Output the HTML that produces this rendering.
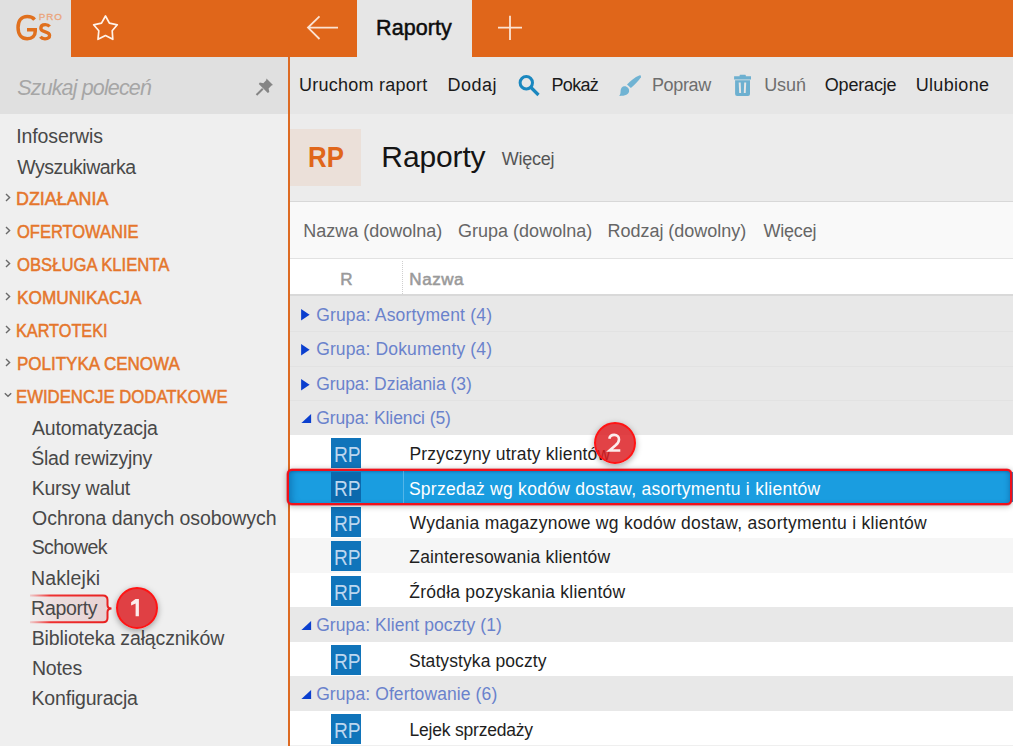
<!DOCTYPE html>
<html><head><meta charset="utf-8"><style>
html,body{margin:0;padding:0;width:1013px;height:746px;overflow:hidden;background:#efefef}
body{position:relative;font-family:"Liberation Sans",sans-serif}
body>div,body>svg{position:absolute}
.t{line-height:1;white-space:nowrap}
</style></head><body>
<div style="left:0px;top:0px;width:1013px;height:746px;background:#efefef;"></div>
<div style="left:0px;top:0px;width:71px;height:57px;background:#e0e0e0;"></div>
<div style="left:71px;top:0px;width:286px;height:57px;background:#e0661a;"></div>
<div style="left:357px;top:0px;width:115px;height:57px;background:#e6e6e6;"></div>
<div style="left:472px;top:0px;width:541px;height:57px;background:#e0661a;"></div>
<div style="left:0px;top:57px;width:288px;height:57px;background:#e0e0e0;"></div>
<div style="left:290px;top:57px;width:723px;height:57px;background:#e6e6e6;"></div>
<div style="left:290px;top:114px;width:723px;height:87px;background:#ececec;"></div>
<div style="left:290px;top:201px;width:723px;height:1px;background:#d8d8d8;"></div>
<div style="left:290px;top:202px;width:723px;height:56px;background:#f9f9f9;"></div>
<div style="left:290px;top:258px;width:723px;height:1px;background:#e2e2e2;"></div>
<div style="left:290px;top:259px;width:723px;height:35px;background:#ffffff;"></div>
<div style="left:290px;top:294px;width:723px;height:2px;background:#d9d9d9;"></div>
<div style="left:288px;top:57px;width:2px;height:689px;background:#dd6a22;"></div>
<svg style="left:10px;top:8px" width="60" height="40" viewBox="10 8 60 40"><path d="M34.6,19.6 C33,17.5 30.4,16.55 27.2,16.55 C21.6,16.55 18.05,20.6 18.05,27.6 C18.05,34.7 21.6,38.75 27.2,38.75 C32.2,38.75 35.25,35.9 35.25,31.2 V29.85 H27" fill="none" stroke="#e0701e" stroke-width="3.5"/><path d="M49.6,26.6 C48.6,25.3 47,24.7 45.2,24.7 C42.4,24.7 40.8,26.2 40.8,28.2 C40.8,33 49.6,30.8 49.6,35.3 C49.6,37.5 47.8,38.8 45,38.8 C42.9,38.8 41.3,38 40.4,36.8" fill="none" stroke="#e0701e" stroke-width="3.3"/></svg>
<div class="t" style="left:38.8px;top:12px;font-size:9.8px;color:#eba47a;letter-spacing:0.9px;-webkit-text-stroke:0.3px #eba47a">PRO</div>
<svg style="left:90px;top:12px" width="32" height="32" viewBox="90 12 32 32"><path d="M105.5,16 L109.4,23.2 L117.3,24.8 L112.2,30.8 L112.8,39.3 L105.5,35.6 L98,39.3 L98.8,30.8 L93.6,24.8 L101.5,23.2 Z" fill="none" stroke="#fff3ea" stroke-width="1.7" stroke-linejoin="round"/></svg>
<svg style="left:300px;top:10px" width="45" height="36" viewBox="300 10 45 36"><path d="M308,27.6 H338 M319.5,16.3 L308,27.6 L319.5,39" fill="none" stroke="#fbe3d3" stroke-width="1.8"/></svg>
<svg style="left:495px;top:12px" width="30" height="32" viewBox="495 12 30 32"><path d="M498,27.6 H522 M510,15.8 V40" fill="none" stroke="#fbe3d3" stroke-width="1.8"/></svg>
<div class="t" id="tab" style="left:376.11px;top:18px;font-size:21.5px;color:#0d0d0d;-webkit-text-stroke:0.5px #0d0d0d;letter-spacing:0.043px;">Raporty</div>
<div class="t" id="tb1" style="left:298.97px;top:76px;font-size:18px;color:#1a1a1a;letter-spacing:0.257px;">Uruchom raport</div>
<div class="t" id="tb2" style="left:447.54px;top:76px;font-size:18px;color:#1a1a1a;letter-spacing:0.511px;">Dodaj</div>
<div class="t" id="tb3" style="left:551.55px;top:76px;font-size:18px;color:#1a1a1a;letter-spacing:-0.690px;">Pokaż</div>
<div class="t" id="tb4" style="left:651.95px;top:76px;font-size:18px;color:#6e6e6e;letter-spacing:-0.344px;">Popraw</div>
<div class="t" id="tb5" style="left:764.15px;top:76px;font-size:18px;color:#6e6e6e;letter-spacing:-0.043px;">Usuń</div>
<div class="t" id="tb6" style="left:824.79px;top:76px;font-size:18px;color:#1a1a1a;letter-spacing:-0.174px;">Operacje</div>
<div class="t" id="tb7" style="left:915.65px;top:76px;font-size:18px;color:#1a1a1a;letter-spacing:0.327px;">Ulubione</div>
<svg style="left:515px;top:72px" width="28" height="28" viewBox="515 72 28 28"><circle cx="526.3" cy="82.8" r="6.2" fill="none" stroke="#1a87bf" stroke-width="3"/><path d="M531,87.5 L538.5,95" stroke="#1a87bf" stroke-width="3.2"/></svg>
<svg style="left:615px;top:72px" width="30" height="28" viewBox="615 72 30 28"><path d="M627,84.6 C630.6,80.8 635,77.2 639.2,75.5 Q641.5,74.8 640.9,77.3 C638.6,81 634.6,85 630.9,88 Z" fill="#70b3d3"/><path d="M623.9,86.3 C626.9,85.8 629.4,88.3 629.1,91.3 C628.8,94.3 625.5,96 619.2,96 C620.5,94.6 620.5,92.8 620.6,90.8 C620.7,88.6 622,86.7 623.9,86.3 Z" fill="#70b3d3"/></svg>
<svg style="left:730px;top:72px" width="26" height="28" viewBox="730 72 26 28"><path d="M739.6,76.3 V75.2 Q739.6,74.8 740,74.8 H745.4 Q745.8,74.8 745.8,75.2 V76.3 H751 V79.6 H734.1 V76.3 Z" fill="#6db0d0"/><path d="M735.1,80.2 H750 V94 Q750,96 748,96 H737.1 Q735.1,96 735.1,94 Z M738.7,82.4 L739.2,92.9 H741.1 L740.7,82.4 Z M744.2,82.4 L743.8,92.9 H745.7 L746.2,82.4 Z" fill="#6db0d0" fill-rule="evenodd"/></svg>
<div class="t" id="search" style="left:17.29px;top:78px;font-size:21.5px;color:#a6a6a6;letter-spacing:-0.866px;font-style:italic;">Szukaj poleceń</div>
<svg style="left:252px;top:74px" width="26" height="26" viewBox="252 74 26 26"><path d="M266.5,78.5 L273,85 L271.5,85.6 L268.6,88.5 L269.3,92 L267.8,93 L258.8,84 L259.8,82.5 L263.3,83.2 L266.2,80.3 Z" fill="#858585"/><path d="M262.8,88.7 L256.5,95" stroke="#858585" stroke-width="2"/></svg>
<div class="t" id="sb1" style="left:16.16px;top:127px;font-size:19.5px;color:#484848;letter-spacing:-0.097px;">Infoserwis</div>
<div class="t" id="sb2" style="left:17.30px;top:158px;font-size:19.5px;color:#484848;letter-spacing:-0.502px;">Wyszukiwarka</div>
<div class="t" id="cat0" style="left:16.09px;top:191px;font-size:17.5px;color:#e5762b;-webkit-text-stroke:0.5px #e5762b;transform:scaleX(1.0213);transform-origin:0 0;">DZIAŁANIA</div>
<svg style="left:3px;top:191px" width="12" height="12" viewBox="3 191 12 12"><path d="M6,194.1 L9.6,197.5 L6,200.9" fill="none" stroke="#6a6a6a" stroke-width="1.4"/></svg>
<div class="t" id="cat1" style="left:17.31px;top:224px;font-size:17.5px;color:#e5762b;-webkit-text-stroke:0.5px #e5762b;transform:scaleX(0.9423);transform-origin:0 0;">OFERTOWANIE</div>
<svg style="left:3px;top:224px" width="12" height="12" viewBox="3 224 12 12"><path d="M6,227.1 L9.6,230.5 L6,233.9" fill="none" stroke="#6a6a6a" stroke-width="1.4"/></svg>
<div class="t" id="cat2" style="left:17.24px;top:257px;font-size:17.5px;color:#e5762b;-webkit-text-stroke:0.5px #e5762b;transform:scaleX(0.9517);transform-origin:0 0;">OBSŁUGA KLIENTA</div>
<svg style="left:3px;top:257px" width="12" height="12" viewBox="3 257 12 12"><path d="M6,260.1 L9.6,263.5 L6,266.9" fill="none" stroke="#6a6a6a" stroke-width="1.4"/></svg>
<div class="t" id="cat3" style="left:16.58px;top:290px;font-size:17.5px;color:#e5762b;-webkit-text-stroke:0.5px #e5762b;transform:scaleX(0.9844);transform-origin:0 0;">KOMUNIKACJA</div>
<svg style="left:3px;top:290px" width="12" height="12" viewBox="3 290 12 12"><path d="M6,293.1 L9.6,296.5 L6,299.9" fill="none" stroke="#6a6a6a" stroke-width="1.4"/></svg>
<div class="t" id="cat4" style="left:16.38px;top:323px;font-size:17.5px;color:#e5762b;-webkit-text-stroke:0.5px #e5762b;transform:scaleX(0.9283);transform-origin:0 0;">KARTOTEKI</div>
<svg style="left:3px;top:323px" width="12" height="12" viewBox="3 323 12 12"><path d="M6,326.1 L9.6,329.5 L6,332.9" fill="none" stroke="#6a6a6a" stroke-width="1.4"/></svg>
<div class="t" id="cat5" style="left:16.62px;top:356px;font-size:17.5px;color:#e5762b;-webkit-text-stroke:0.5px #e5762b;transform:scaleX(0.9713);transform-origin:0 0;">POLITYKA CENOWA</div>
<svg style="left:3px;top:356px" width="12" height="12" viewBox="3 356 12 12"><path d="M6,359.1 L9.6,362.5 L6,365.9" fill="none" stroke="#6a6a6a" stroke-width="1.4"/></svg>
<div class="t" id="cat6" style="left:16.01px;top:389px;font-size:17.5px;color:#e5762b;-webkit-text-stroke:0.5px #e5762b;transform:scaleX(0.9562);transform-origin:0 0;">EWIDENCJE DODATKOWE</div>
<svg style="left:3px;top:388px" width="12" height="12" viewBox="3 388 12 12"><path d="M4.8,393.3 L8,396.3 L11.2,393.3" fill="none" stroke="#6a6a6a" stroke-width="1.4"/></svg>
<div class="t" id="sub0" style="left:31.92px;top:419px;font-size:19.5px;color:#484848;letter-spacing:-0.153px;">Automatyzacja</div>
<div class="t" id="sub1" style="left:31.30px;top:449px;font-size:19.5px;color:#484848;letter-spacing:-0.275px;">Ślad rewizyjny</div>
<div class="t" id="sub2" style="left:31.64px;top:479px;font-size:19.5px;color:#484848;letter-spacing:-0.219px;">Kursy walut</div>
<div class="t" id="sub3" style="left:32.12px;top:509px;font-size:19.5px;color:#484848;letter-spacing:-0.072px;">Ochrona danych osobowych</div>
<div class="t" id="sub4" style="left:31.64px;top:538px;font-size:19.5px;color:#484848;letter-spacing:-0.541px;">Schowek</div>
<div class="t" id="sub5" style="left:31.12px;top:569px;font-size:19.5px;color:#484848;letter-spacing:0.107px;">Naklejki</div>
<svg style="left:28px;top:592px" width="90" height="34" viewBox="28 592 90 34"><defs><linearGradient id="hg" x1="0" x2="1"><stop offset="0" stop-color="#efe3e3" stop-opacity="0.2"/><stop offset="0.3" stop-color="#eddede"/><stop offset="1" stop-color="#e6d0d2"/></linearGradient><linearGradient id="hb" x1="0" x2="1"><stop offset="0" stop-color="#f04040" stop-opacity="0.2"/><stop offset="0.25" stop-color="#ee3030"/><stop offset="1" stop-color="#e82020"/></linearGradient></defs><path d="M30,595.5 H103 Q107.5,595.5 107.5,600 V605 Q107.5,608.5 111.5,608.5 Q107.5,608.5 107.5,612 V618 Q107.5,622.3 103,622.3 H30" fill="url(#hg)" stroke="url(#hb)" stroke-width="2"/></svg>
<div class="t" id="sub6" style="left:31.12px;top:599px;font-size:19.5px;color:#484848;letter-spacing:-0.307px;">Raporty</div>
<div class="t" id="sub7" style="left:31.64px;top:629px;font-size:19.5px;color:#484848;letter-spacing:-0.119px;">Biblioteka załączników</div>
<div class="t" id="sub8" style="left:31.96px;top:659px;font-size:19.5px;color:#484848;letter-spacing:-0.167px;">Notes</div>
<div class="t" id="sub9" style="left:31.54px;top:689px;font-size:19.5px;color:#484848;letter-spacing:-0.185px;">Konfiguracja</div>
<div style="left:290px;top:129px;width:71px;height:57px;background:#ebe0d9;"></div>
<div class="t" id="rpbig" style="left:307.94px;top:142px;font-size:30px;color:#e0661a;font-weight:700;transform:scaleX(0.8604);transform-origin:0 0;">RP</div>
<div class="t" id="title" style="left:381.37px;top:142px;font-size:30px;color:#141414;letter-spacing:-0.135px;">Raporty</div>
<div class="t" id="more" style="left:501.71px;top:150px;font-size:18px;color:#555555;letter-spacing:-0.231px;">Więcej</div>
<div class="t" id="flt0" style="left:303.22px;top:222px;font-size:18px;color:#666666;letter-spacing:-0.010px;">Nazwa (dowolna)</div>
<div class="t" id="flt1" style="left:458.04px;top:222px;font-size:18px;color:#666666;letter-spacing:0.007px;">Grupa (dowolna)</div>
<div class="t" id="flt2" style="left:607.55px;top:222px;font-size:18px;color:#666666;letter-spacing:-0.032px;">Rodzaj (dowolny)</div>
<div class="t" id="flt3" style="left:763.39px;top:222px;font-size:18px;color:#666666;letter-spacing:-0.187px;">Więcej</div>
<div class="t" id="colR" style="left:340.35px;top:271px;font-size:17px;color:#9a9a9a;-webkit-text-stroke:0.55px #9a9a9a;letter-spacing:-2.096px;">R</div>
<div class="t" id="colN" style="left:409.37px;top:271px;font-size:17px;color:#9a9a9a;-webkit-text-stroke:0.55px #9a9a9a;letter-spacing:0.520px;">Nazwa</div>
<div style="left:402px;top:261px;width:0;height:33px;border-left:1px dotted #cfcfcf"></div>
<div style="left:290px;top:296px;width:723px;height:35px;background:#e8e8e8;"></div>
<svg style="left:300px;top:306px" width="14" height="16" viewBox="300 306 14 16"><path d="M301.1,309.1 L309.6,314.8 L301.1,320.5 Z" fill="#0b3fcf"/></svg>
<div class="t" id="row0" style="left:316.13px;top:307px;font-size:17.5px;color:#6a82cc;letter-spacing:0.185px;">Grupa: Asortyment (4)</div>
<div style="left:290px;top:331px;width:723px;height:35px;background:#e8e8e8;"></div>
<div style="left:290px;top:331px;width:723px;height:1px;background:#e2e2e2;"></div>
<svg style="left:300px;top:341px" width="14" height="16" viewBox="300 341 14 16"><path d="M301.1,344.1 L309.6,349.8 L301.1,355.5 Z" fill="#0b3fcf"/></svg>
<div class="t" id="row1" style="left:316.13px;top:341px;font-size:17.5px;color:#6a82cc;letter-spacing:0.147px;">Grupa: Dokumenty (4)</div>
<div style="left:290px;top:366px;width:723px;height:34px;background:#e8e8e8;"></div>
<div style="left:290px;top:366px;width:723px;height:1px;background:#e2e2e2;"></div>
<svg style="left:300px;top:376px" width="14" height="16" viewBox="300 376 14 16"><path d="M301.1,379.1 L309.6,384.8 L301.1,390.5 Z" fill="#0b3fcf"/></svg>
<div class="t" id="row2" style="left:316.13px;top:376px;font-size:17.5px;color:#6a82cc;letter-spacing:-0.052px;">Grupa: Działania (3)</div>
<div style="left:290px;top:400px;width:723px;height:35px;background:#e8e8e8;"></div>
<div style="left:290px;top:400px;width:723px;height:1px;background:#e2e2e2;"></div>
<svg style="left:300px;top:410px" width="14" height="16" viewBox="300 410 14 16"><path d="M301.4,423 H311.1 V414 Z" fill="#0b3fcf"/></svg>
<div class="t" id="row3" style="left:316.13px;top:410px;font-size:17.5px;color:#6a82cc;letter-spacing:-0.079px;">Grupa: Klienci (5)</div>
<div style="left:290px;top:435px;width:723px;height:34px;background:#ffffff;"></div>
<div style="left:331px;top:438px;width:30px;height:30px;background:#1074ba;"></div>
<div class="t" id="rp4" style="left:333.94px;top:445px;font-size:21.5px;color:#bcd7ef;transform:scaleX(0.8916);transform-origin:0 0;">RP</div>
<div class="t" id="row4" style="left:409.43px;top:446px;font-size:17.5px;color:#1e1e1e;letter-spacing:0.178px;">Przyczyny utraty klientów</div>
<div style="left:290px;top:469px;width:723px;height:35px;background:#ffffff;"></div>
<div style="left:290px;top:504px;width:723px;height:34px;background:#ffffff;"></div>
<div style="left:331px;top:507px;width:30px;height:30px;background:#1074ba;"></div>
<div class="t" id="rp6" style="left:333.94px;top:514px;font-size:21.5px;color:#bcd7ef;transform:scaleX(0.8916);transform-origin:0 0;">RP</div>
<div class="t" id="row6" style="left:409.62px;top:515px;font-size:17.5px;color:#1e1e1e;letter-spacing:0.286px;">Wydania magazynowe wg kodów dostaw, asortymentu i klientów</div>
<div style="left:290px;top:538px;width:723px;height:35px;background:#f6f6f6;"></div>
<div style="left:331px;top:541px;width:30px;height:30px;background:#1074ba;"></div>
<div class="t" id="rp7" style="left:333.94px;top:548px;font-size:21.5px;color:#bcd7ef;transform:scaleX(0.8916);transform-origin:0 0;">RP</div>
<div class="t" id="row7" style="left:409.26px;top:549px;font-size:17.5px;color:#1e1e1e;letter-spacing:0.188px;">Zainteresowania klientów</div>
<div style="left:290px;top:573px;width:723px;height:34px;background:#ffffff;"></div>
<div style="left:331px;top:576px;width:30px;height:30px;background:#1074ba;"></div>
<div class="t" id="rp8" style="left:333.94px;top:583px;font-size:21.5px;color:#bcd7ef;transform:scaleX(0.8916);transform-origin:0 0;">RP</div>
<div class="t" id="row8" style="left:409.26px;top:584px;font-size:17.5px;color:#1e1e1e;letter-spacing:0.232px;">Źródła pozyskania klientów</div>
<div style="left:290px;top:607px;width:723px;height:35px;background:#e8e8e8;"></div>
<svg style="left:300px;top:617px" width="14" height="16" viewBox="300 617 14 16"><path d="M301.4,630 H311.1 V621 Z" fill="#0b3fcf"/></svg>
<div class="t" id="row9" style="left:316.13px;top:617px;font-size:17.5px;color:#6a82cc;letter-spacing:0.079px;">Grupa: Klient poczty (1)</div>
<div style="left:290px;top:642px;width:723px;height:34px;background:#ffffff;"></div>
<div style="left:331px;top:645px;width:30px;height:30px;background:#1074ba;"></div>
<div class="t" id="rp10" style="left:333.94px;top:652px;font-size:21.5px;color:#bcd7ef;transform:scaleX(0.8916);transform-origin:0 0;">RP</div>
<div class="t" id="row10" style="left:408.90px;top:653px;font-size:17.5px;color:#1e1e1e;letter-spacing:0.088px;">Statystyka poczty</div>
<div style="left:290px;top:676px;width:723px;height:35px;background:#e8e8e8;"></div>
<svg style="left:300px;top:686px" width="14" height="16" viewBox="300 686 14 16"><path d="M301.4,699 H311.1 V690 Z" fill="#0b3fcf"/></svg>
<div class="t" id="row11" style="left:316.13px;top:686px;font-size:17.5px;color:#6a82cc;letter-spacing:0.101px;">Grupa: Ofertowanie (6)</div>
<div style="left:290px;top:711px;width:723px;height:34px;background:#ffffff;"></div>
<div style="left:331px;top:714px;width:30px;height:30px;background:#1074ba;"></div>
<div class="t" id="rp12" style="left:333.94px;top:721px;font-size:21.5px;color:#bcd7ef;transform:scaleX(0.8916);transform-origin:0 0;">RP</div>
<div class="t" id="row12" style="left:409.51px;top:722px;font-size:17.5px;color:#1e1e1e;letter-spacing:-0.208px;">Lejek sprzedaży</div>
<div style="left:1008px;top:472px;width:5px;height:30px;background:#1a9de0;"></div>
<div style="left:287px;top:469px;width:721px;height:32px;background:#1a9de0;border:2px solid #f0101a;border-radius:5px;box-shadow:0 0 0 0.5px rgba(240,16,26,0.7),0 1px 6px rgba(0,0,0,0.32),inset 6px 0 6px -3px rgba(0,60,120,0.35),inset -4px 0 4px -2px rgba(0,60,120,0.25),inset 0 2px 2px -1px rgba(0,60,120,0.25)"></div>
<div style="left:403px;top:471px;width:1px;height:32px;background:rgba(255,255,255,0.25);"></div>
<div style="left:331px;top:472px;width:30px;height:30px;background:#0b69ad;"></div>
<div class="t" id="rp5" style="left:333.94px;top:479px;font-size:21.5px;color:#bcd7ef;transform:scaleX(0.8916);transform-origin:0 0;">RP</div>
<div class="t" id="row5" style="left:408.90px;top:481px;font-size:17.5px;color:#ffffff;letter-spacing:0.267px;">Sprzedaż wg kodów dostaw, asortymentu i klientów</div>
<div style="left:115.5px;top:586.5px;width:38px;height:38px;border-radius:50%;background:rgba(220,30,34,0.84);border:2px solid #ff1414;box-shadow:0 2px 6px rgba(0,0,0,0.35)"></div>
<svg style="left:115px;top:586px" width="42" height="42" viewBox="115 586 42 42"><path d="M135.5,599 H138.9 V616.2 H135.6 V603.4 L131.1,605.4 V602.2 Z" fill="#fcecec"/></svg>
<div style="left:593.7px;top:421.5px;width:38px;height:38px;border-radius:50%;background:rgba(220,30,34,0.84);border:2px solid #ff1414;box-shadow:0 2px 6px rgba(0,0,0,0.35)"></div>
<svg style="left:593px;top:421px" width="42" height="42" viewBox="593 421 42 42"><path d="M609.3,438.8 C609.8,436.1 611.7,434.9 614.2,434.9 C617.1,434.9 619,436.8 619,439.4 C619,441.7 617.8,443.3 615.6,445.3 L609.6,450.5 H620.3" fill="none" stroke="#fcecec" stroke-width="2.6" stroke-linejoin="miter"/></svg>
</body></html>
